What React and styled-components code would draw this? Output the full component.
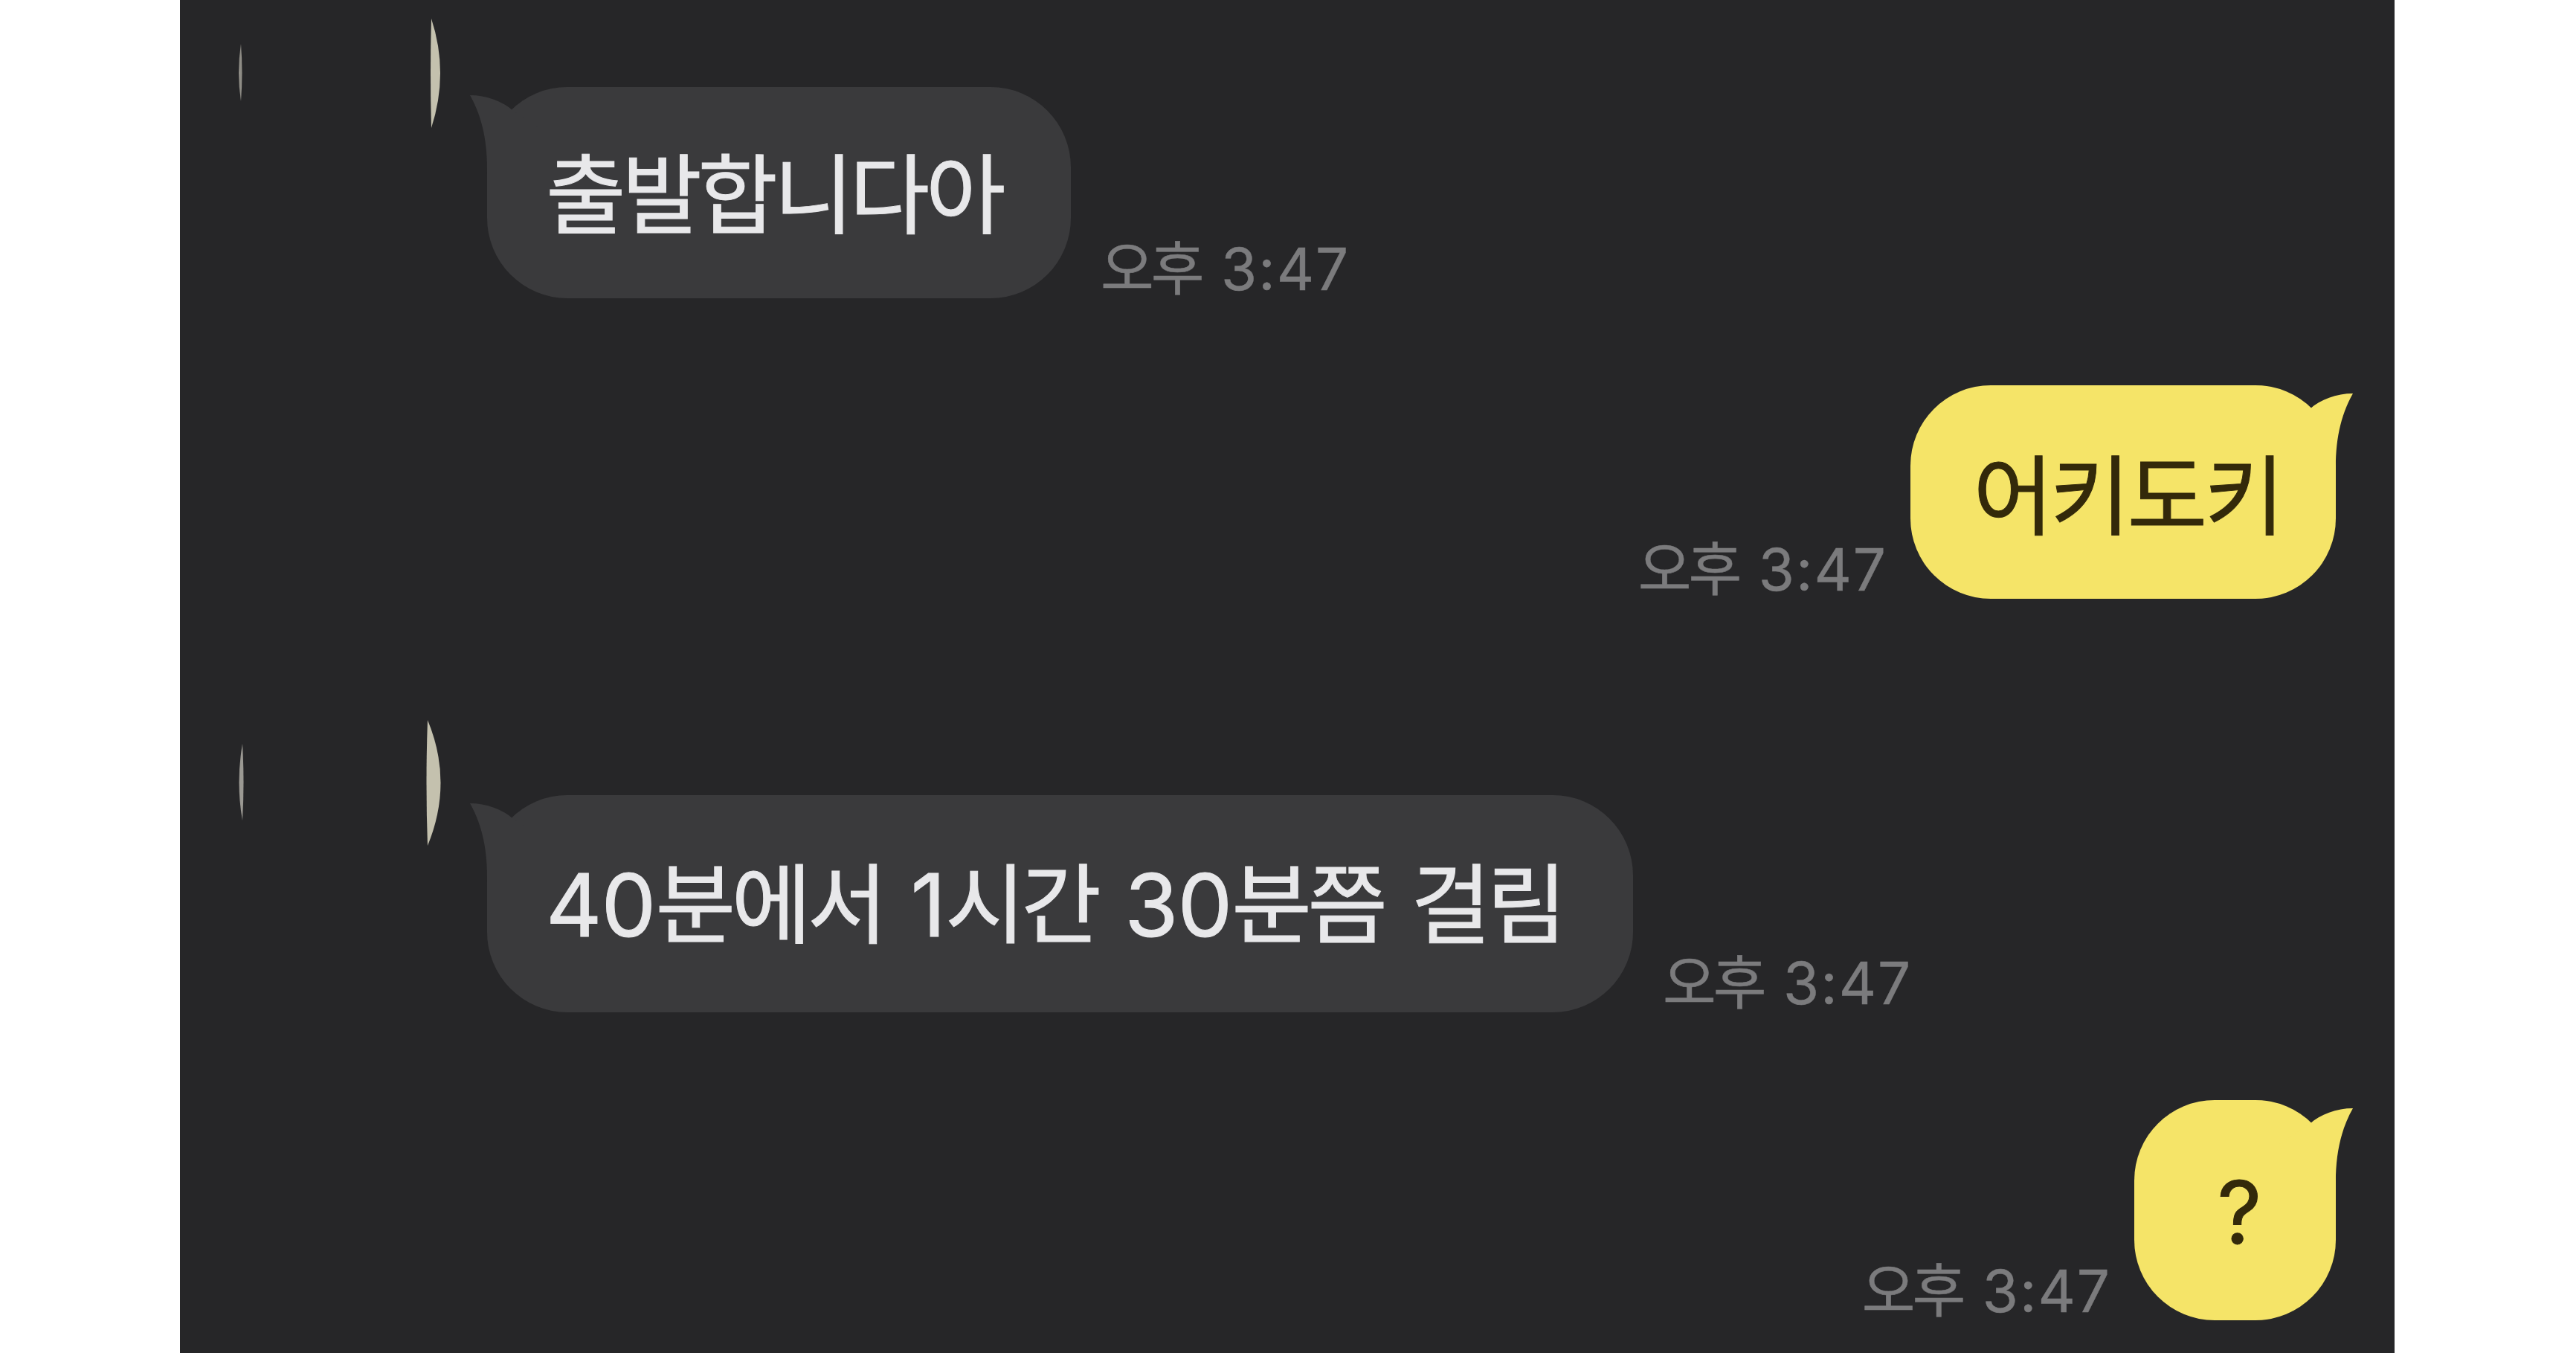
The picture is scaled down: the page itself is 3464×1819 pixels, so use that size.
import { Fragment } from 'react';
import styled, { createGlobalStyle } from 'styled-components';

const messages = [
  { id: 1, mine: false, text: '출발합니다아', time: '오후 3:47', width: 785, height: 284, gap: 0, lift: 10, avatar: 'small' },
  { id: 2, mine: true, text: '어키도키', time: '오후 3:47', width: 572, height: 287, gap: 117, lift: 4 },
  { id: 3, mine: false, text: '40분에서 1시간 30분쯤 걸림', time: '오후 3:47', width: 1541, height: 292, gap: 163, lift: 14, avatar: 'large' },
  { id: 4, mine: true, text: '?', time: '오후 3:47', width: 271, height: 296, gap: 118, lift: 12 },
];

// hangul and latin runs use different fonts, so split them
const Label = ({ children }) =>
  children.split(/([0-9:?]+)/).map((part, i) =>
    i % 2 ? <Latin key={i}>{part}</Latin> : <Fragment key={i}>{part}</Fragment>
  );

const Avatar = ({ size }) =>
  size === 'small' ? (
    <AvatarArt width="276" height="147" viewBox="0 0 276 147">
      <path d="M6 34 Q0 73 6 111 Q9 73 6 34Z" fill="#8f8d86" />
      <path d="M262 0 Q286 73 262 147 Q260 73 262 0Z" fill="#c4c1ae" />
    </AvatarArt>
  ) : (
    <AvatarArt width="276" height="169" viewBox="0 0 276 169">
      <path d="M8 32 Q-1 84 8 135 Q11 84 8 32Z" fill="#9b9993" />
      <path d="M257 0 Q292 84 257 169 Q254 84 257 0Z" fill="#c4c1ae" />
    </AvatarArt>
  );

const Tail = ({ mine }) => (
  <TailArt $mine={mine} width="110" height="120" viewBox="0 0 110 120">
    <path d="M0 11 C22 11 44 19 58 32 L100 60 L100 118 L23 118 C24 76 17 41 0 11Z" />
  </TailArt>
);

const App = () => {
  return (
    <>
      <GlobalStyle />
      <Page>
        <ChatRoom>
          {messages.map(({ id, mine, text, time, width, height, gap, lift, avatar }) => (
            <Row key={id} $mine={mine} $gap={gap}>
              {!mine && <Avatar size={avatar} />}
              <Bubble
                $mine={mine}
                $width={width}
                $height={height}
                $lift={lift}
                $offset={avatar === 'large' ? 101 : 92}
              >
                <Tail mine={mine} />
                <Text $mine={mine}>
                  <Label>{text}</Label>
                </Text>
              </Bubble>
              <Time $mine={mine}>
                <Label>{time}</Label>
              </Time>
            </Row>
          ))}
        </ChatRoom>
      </Page>
    </>
  );
};

const GlobalStyle = createGlobalStyle`
  body {
    margin: 0;
    background: #ffffff;
  }
`;

const Page = styled.div`
  display: flex;
  height: 1819px;
  overflow: hidden;
  padding: 0 244px 0 242px;
  font-family: 'Noto Sans CJK KR', sans-serif;
`;

const ChatRoom = styled.main`
  flex: 1;
  display: flex;
  flex-direction: column;
  box-sizing: border-box;
  padding: 25px 79px 0 76px;
  background: #262628;
`;

const Row = styled.div`
  display: flex;
  flex-direction: ${({ $mine }) => ($mine ? 'row-reverse' : 'row')};
  align-items: flex-end;
  flex-shrink: 0;
  margin-top: ${({ $gap }) => $gap}px;
`;

const AvatarArt = styled.svg`
  align-self: flex-start;
  flex-shrink: 0;
  margin-right: 61px;
`;

const Bubble = styled.div`
  position: relative;
  display: flex;
  align-items: center;
  justify-content: ${({ $mine }) => ($mine ? 'center' : 'flex-start')};
  box-sizing: border-box;
  flex-shrink: 0;
  width: ${({ $width }) => $width}px;
  height: ${({ $height }) => $height}px;
  margin-top: ${({ $mine, $offset }) => ($mine ? 0 : $offset)}px;
  padding-left: ${({ $mine }) => ($mine ? 11 : 79)}px;
  padding-bottom: ${({ $lift }) => $lift}px;
  border-radius: 108px;
  background: ${({ $mine }) => ($mine ? '#f5e468' : '#3a3a3c')};
  color: ${({ $mine }) => ($mine ? '#33290a' : '#e8e8ea')};
  fill: ${({ $mine }) => ($mine ? '#f5e468' : '#3a3a3c')};
`;

const TailArt = styled.svg`
  position: absolute;
  top: 0;
  ${({ $mine }) => ($mine ? 'right: -23px; transform: scaleX(-1);' : 'left: -23px;')}
`;

const Latin = styled.span`
  font-family: 'Inter', sans-serif;
  line-height: 0;
`;

const Text = styled.p`
  position: relative;
  margin: 0;
  font-size: 117px;
  line-height: 1;
  letter-spacing: ${({ $mine }) => ($mine ? -4 : -5.5)}px;
  word-spacing: 16px;
  white-space: nowrap;
  -webkit-text-stroke: 1px currentColor;

  ${Latin} {
    letter-spacing: -1px;
  }
`;

const Time = styled.time`
  margin: ${({ $mine }) => ($mine ? '0 31px 6px 0' : '0 0 6px 40px')};
  font-size: 78px;
  line-height: 1;
  letter-spacing: -4px;
  word-spacing: 13px;
  white-space: nowrap;
  color: #7b7b7d;
  -webkit-text-stroke: 0.5px currentColor;

  ${Latin} {
    letter-spacing: 2px;
  }
`;

export default App;
